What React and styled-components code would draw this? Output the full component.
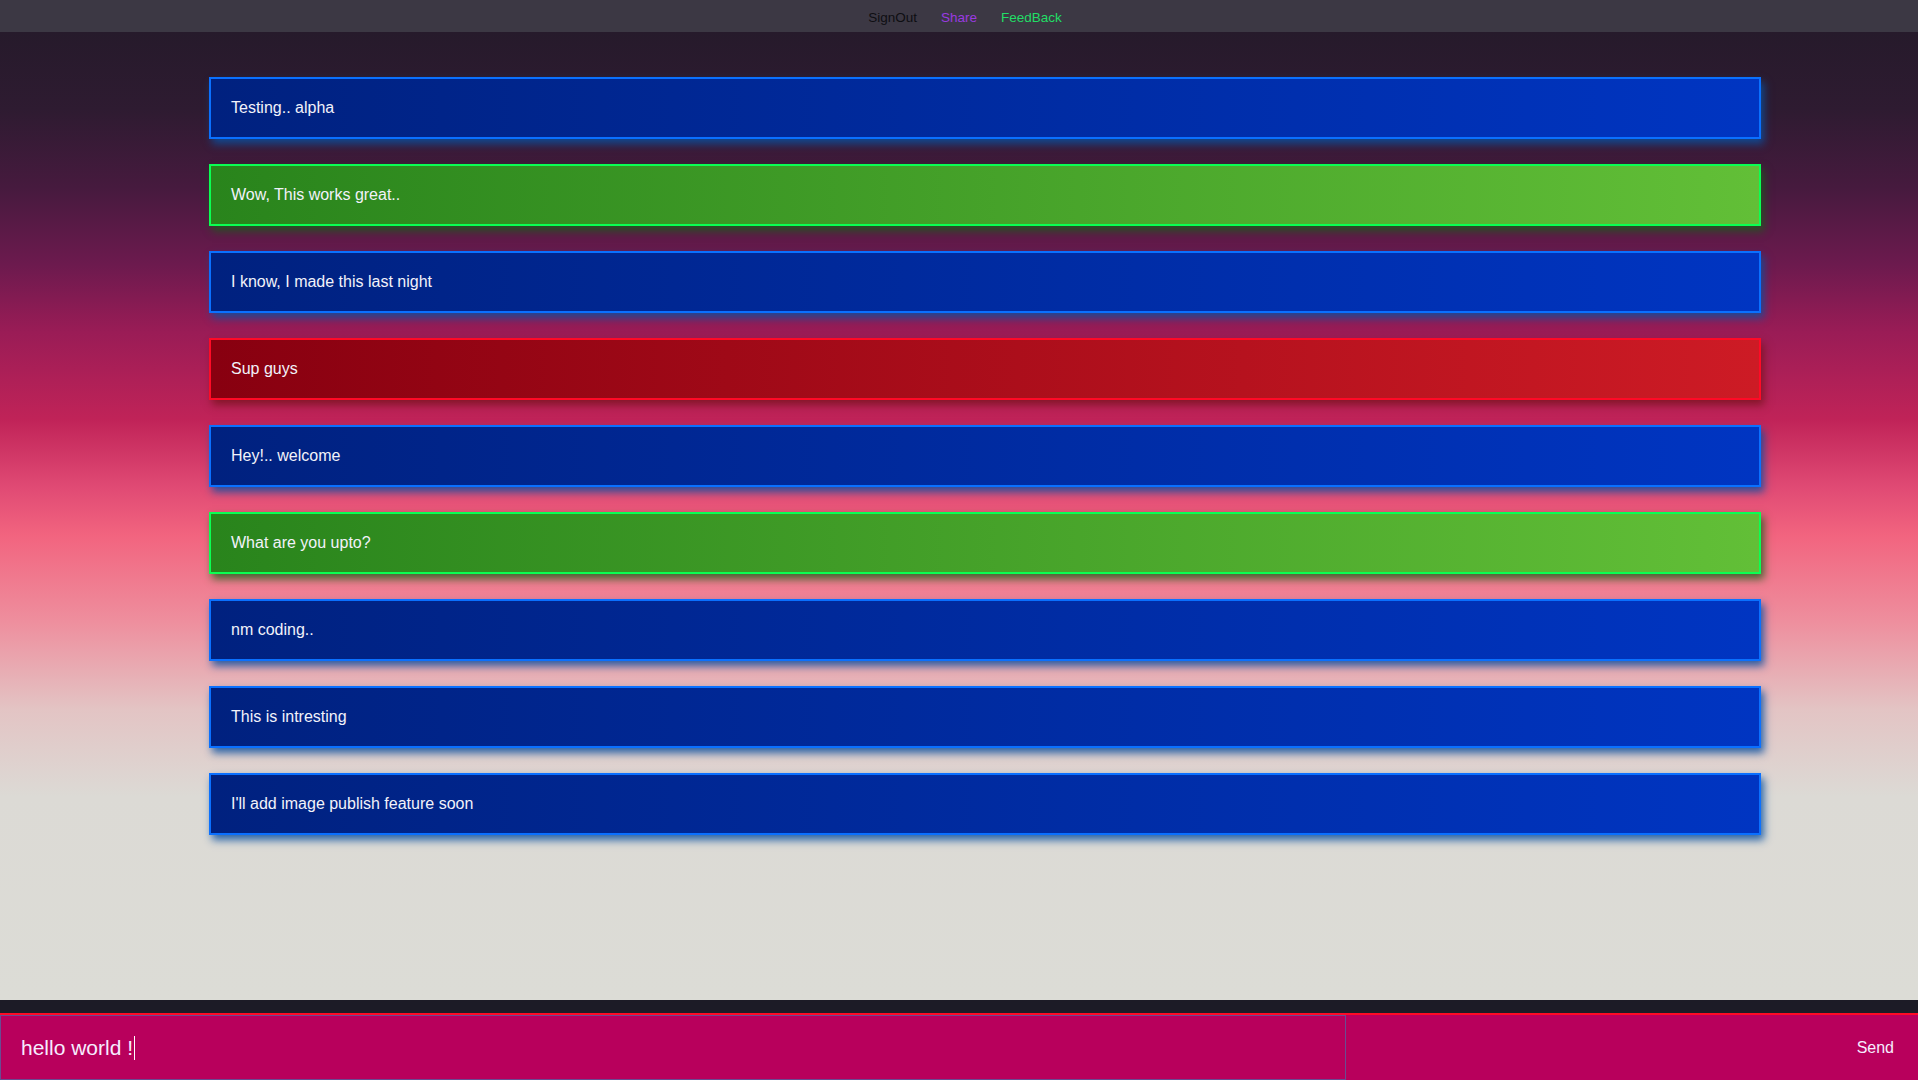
import React from 'react';
import styled, { createGlobalStyle, css } from 'styled-components';

const GlobalStyle = createGlobalStyle`
	* {
		box-sizing: border-box;
	}

	html,
	body {
		margin: 0;
		padding: 0;
		height: 100%;
	}

	body {
		font-family: 'Liberation Sans', Arial, sans-serif;
		background-color: #1c1b26;
	}
`;

const messages = [
	{ id: 1, text: 'Testing.. alpha', tone: 'blue' },
	{ id: 2, text: 'Wow, This works great..', tone: 'green' },
	{ id: 3, text: 'I know, I made this last night', tone: 'blue' },
	{ id: 4, text: 'Sup guys', tone: 'red' },
	{ id: 5, text: 'Hey!.. welcome', tone: 'blue' },
	{ id: 6, text: 'What are you upto?', tone: 'green' },
	{ id: 7, text: 'nm coding..', tone: 'blue' },
	{ id: 8, text: 'This is intresting', tone: 'blue' },
	{ id: 9, text: "I'll add image publish feature soon", tone: 'blue' },
];

const tones = {
	blue: css`
		border-color: #0a70ff;
		background: linear-gradient(to right, #00217f, #0035c2);
		box-shadow: 3px 5px 8px rgba(10, 80, 160, 0.85);
	`,
	green: css`
		border-color: #0aff52;
		background: linear-gradient(to right, #29841c, #62bf37);
		box-shadow: 3px 5px 8px rgba(25, 95, 25, 0.8);
	`,
	red: css`
		border-color: #ff0a26;
		background: linear-gradient(to right, #880010, #cd1b25);
		box-shadow: 3px 5px 8px rgba(120, 20, 30, 0.8);
	`,
};

const Page = styled.div`
	display: flex;
	flex-direction: column;
	height: 100vh;
`;

const TopBar = styled.nav`
	display: flex;
	justify-content: center;
	align-items: center;
	gap: 24px;
	height: 32px;
	padding: 2px 0 0 12px;
	background-color: #3c3844;
	flex-shrink: 0;
`;

const NavLink = styled.a`
	font-size: 13.5px;
	color: ${({ $color }) => $color};
	text-decoration: none;
	cursor: pointer;
`;

const Main = styled.main`
	flex: 1;
	padding: 45px 157px 0 209px;
	background: linear-gradient(
		180deg,
		#261a2b 0%,
		#2e1b31 8%,
		#461a3e 16%,
		#6c1a4e 24%,
		#9a1c56 31%,
		#c02358 40%,
		#e04a74 47%,
		#f2647f 52%,
		#ee8f9e 61%,
		#e3c4c4 70%,
		#dcdad5 79%,
		#dcdcd6 100%
	);
	overflow: hidden;
`;

const MessageList = styled.ul`
	display: flex;
	flex-direction: column;
	gap: 25px;
	margin: 0;
	padding: 0;
	list-style: none;
`;

const Message = styled.li`
	display: flex;
	align-items: center;
	height: 62px;
	padding: 0 20px;
	border: 2px solid;
	font-size: 16px;
	color: #f2f2fa;
	${({ $tone }) => tones[$tone]}
`;

const BottomStrip = styled.div`
	height: 13px;
	background-color: #1c1b26;
	flex-shrink: 0;
`;

const Composer = styled.form`
	display: flex;
	height: 67px;
	border-top: 2px solid #ff0a26;
	background-color: #b8005c;
	flex-shrink: 0;
`;

const TextField = styled.div`
	display: flex;
	align-items: center;
	width: 1346px;
	padding: 0 20px;
	border: 1px solid #6a4b92;
	font-size: 21px;
	color: #f6ecff;
`;

const Caret = styled.span`
	display: inline-block;
	width: 1px;
	height: 24px;
	margin-left: 1px;
	background-color: #ffffff;
`;

const SendButton = styled.button`
	flex: 1;
	display: flex;
	justify-content: flex-end;
	align-items: center;
	padding: 0 24px 0 0;
	border: none;
	background: transparent;
	font-family: 'Liberation Sans', Arial, sans-serif;
	font-size: 16px;
	color: #f6ecff;
	cursor: pointer;
`;

export default function App() {
	return (
		<>
			<GlobalStyle />
			<Page>
				<TopBar>
					<NavLink $color="#0e0e12">SignOut</NavLink>
					<NavLink $color="#9a3ae0">Share</NavLink>
					<NavLink $color="#22dd66">FeedBack</NavLink>
				</TopBar>
				<Main>
					<MessageList>
						{messages.map((message) => (
							<Message key={message.id} $tone={message.tone}>
								{message.text}
							</Message>
						))}
					</MessageList>
				</Main>
				<BottomStrip />
				<Composer onSubmit={(e) => e.preventDefault()}>
					<TextField>
						hello world !
						<Caret />
					</TextField>
					<SendButton type="submit">Send</SendButton>
				</Composer>
			</Page>
		</>
	);
}
